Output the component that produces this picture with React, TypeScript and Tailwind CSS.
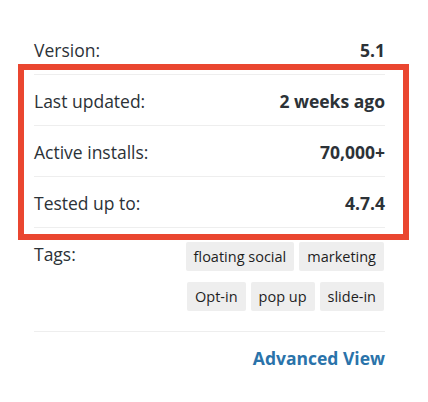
import React from "react";

const rows = [
  ["Version:", "5.1"],
  ["Last updated:", "2 weeks ago"],
  ["Active installs:", "70,000+"],
  ["Tested up to:", "4.7.4"],
];

const tagRows = [
  ["floating social", "marketing"],
  ["Opt-in", "pop up", "slide-in"],
];

export default function App() {
  return (
    <div
      className="relative w-[428px] h-[402px] bg-white text-[#2c3237]"
      style={{ fontFamily: '"Open Sans", "Liberation Sans", sans-serif' }}
    >
      <div className="ml-[34px] w-[351px] pt-[24px]">
        {rows.map(([k, v]) => (
          <div
            key={k}
            className="flex h-[51px] items-center justify-between border-b border-[#eeeeee] pt-[2px] text-[17.5px]"
          >
            <span>{k}</span>
            <span className="font-bold">{v}</span>
          </div>
        ))}
        <div className="flex justify-between border-b border-[#eeeeee] pt-[14px] pb-[20px]">
          <span className="text-[17.5px] leading-[24px]">Tags:</span>
          <div className="flex flex-col items-end gap-[11px] pr-px">
            {tagRows.map((r, i) => (
              <div key={i} className="flex gap-[5px]">
                {r.map((t) => (
                  <span
                    key={t}
                    className="flex h-[29px] items-center rounded-[2px] bg-[#eeeeee] px-[8px] text-[14.5px] text-[#1e1e1e]"
                  >
                    {t}
                  </span>
                ))}
              </div>
            ))}
          </div>
        </div>
        <div className="flex justify-end pt-[14px]">
          <a className="text-[17.5px] font-bold text-[#2a73aa] leading-[24px]">Advanced View</a>
        </div>
      </div>
      <div className="pointer-events-none absolute left-[18px] top-[64px] h-[176px] w-[391px] border-[6px] border-[#ea4630]" />
    </div>
  );
}
